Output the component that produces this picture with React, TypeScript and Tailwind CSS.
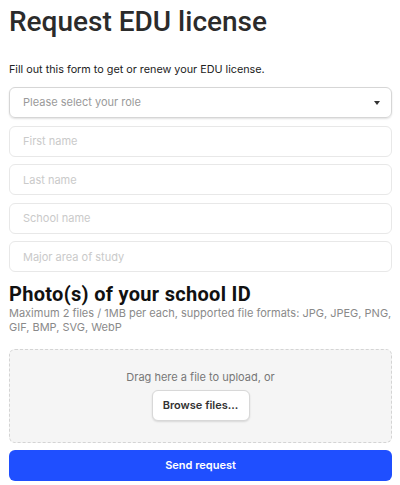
import React from 'react';

const fields = ['First name', 'Last name', 'School name', 'Major area of study'];

export default function App() {
  return (
    <div className="w-[400px] h-[485px] bg-white pl-[9px] pr-[8px] font-['Inter','Liberation_Sans',sans-serif] overflow-hidden">
      <h1 className="pt-[4px] text-[28px] leading-[36px] font-medium text-[#2b2b2b] font-['Roboto','Liberation_Sans',sans-serif]">
        Request EDU license
      </h1>
      <p className="mt-[23px] text-[10.8px] leading-[14px] text-[#222]">
        Fill out this form to get or renew your EDU license.
      </p>

      <div className="mt-[10px] flex flex-col gap-[7.5px]">
        <div className="h-[31px] flex items-center justify-between rounded-[6px] border border-[#d6d6d6] shadow-[0_1px_2px_rgba(0,0,0,0.12)] pl-[13px] pr-[11px]">
          <span className="text-[11px] text-[#9a9a9a]">Please select your role</span>
          <svg width="6" height="4" viewBox="0 0 6 4">
            <path d="M0 0h6L3 4z" fill="#333" />
          </svg>
        </div>
        {fields.map(f => (
          <input
            key={f}
            placeholder={f}
            className="h-[31px] rounded-[6px] border border-[#e8e8e8] pl-[13px] text-[11px] placeholder:text-[#cacaca] outline-none"
          />
        ))}
      </div>

      <h2 className="mt-[10px] text-[20px] leading-[24px] font-bold text-[#111] font-['Roboto','Liberation_Sans',sans-serif] tracking-[0.3px]">
        Photo(s) of your school ID
      </h2>
      <p className="text-[11px] leading-[14px] text-[#8a8a8a]">
        Maximum 2 files / 1MB per each, supported file formats: JPG, JPEG, PNG, GIF, BMP, SVG, WebP
      </p>

      <div className="mt-[15px] h-[94px] rounded-[6px] border border-dashed border-[#d4d4d4] bg-[#f5f5f5] flex flex-col items-center pt-[20px]">
        <span className="text-[11px] leading-[14px] text-[#777]">Drag here a file to upload, or</span>
        <button className="mt-[6px] h-[31px] w-[98px] rounded-[6px] border border-[#d8d8d8] bg-white shadow-[0_1px_2px_rgba(0,0,0,0.12)] text-[11px] font-semibold text-[#333]">
          Browse files...
        </button>
      </div>

      <button className="mt-[7px] w-full h-[31px] rounded-[6px] bg-[#1f4fff] text-white text-[11px] font-semibold">
        Send request
      </button>
    </div>
  );
}
